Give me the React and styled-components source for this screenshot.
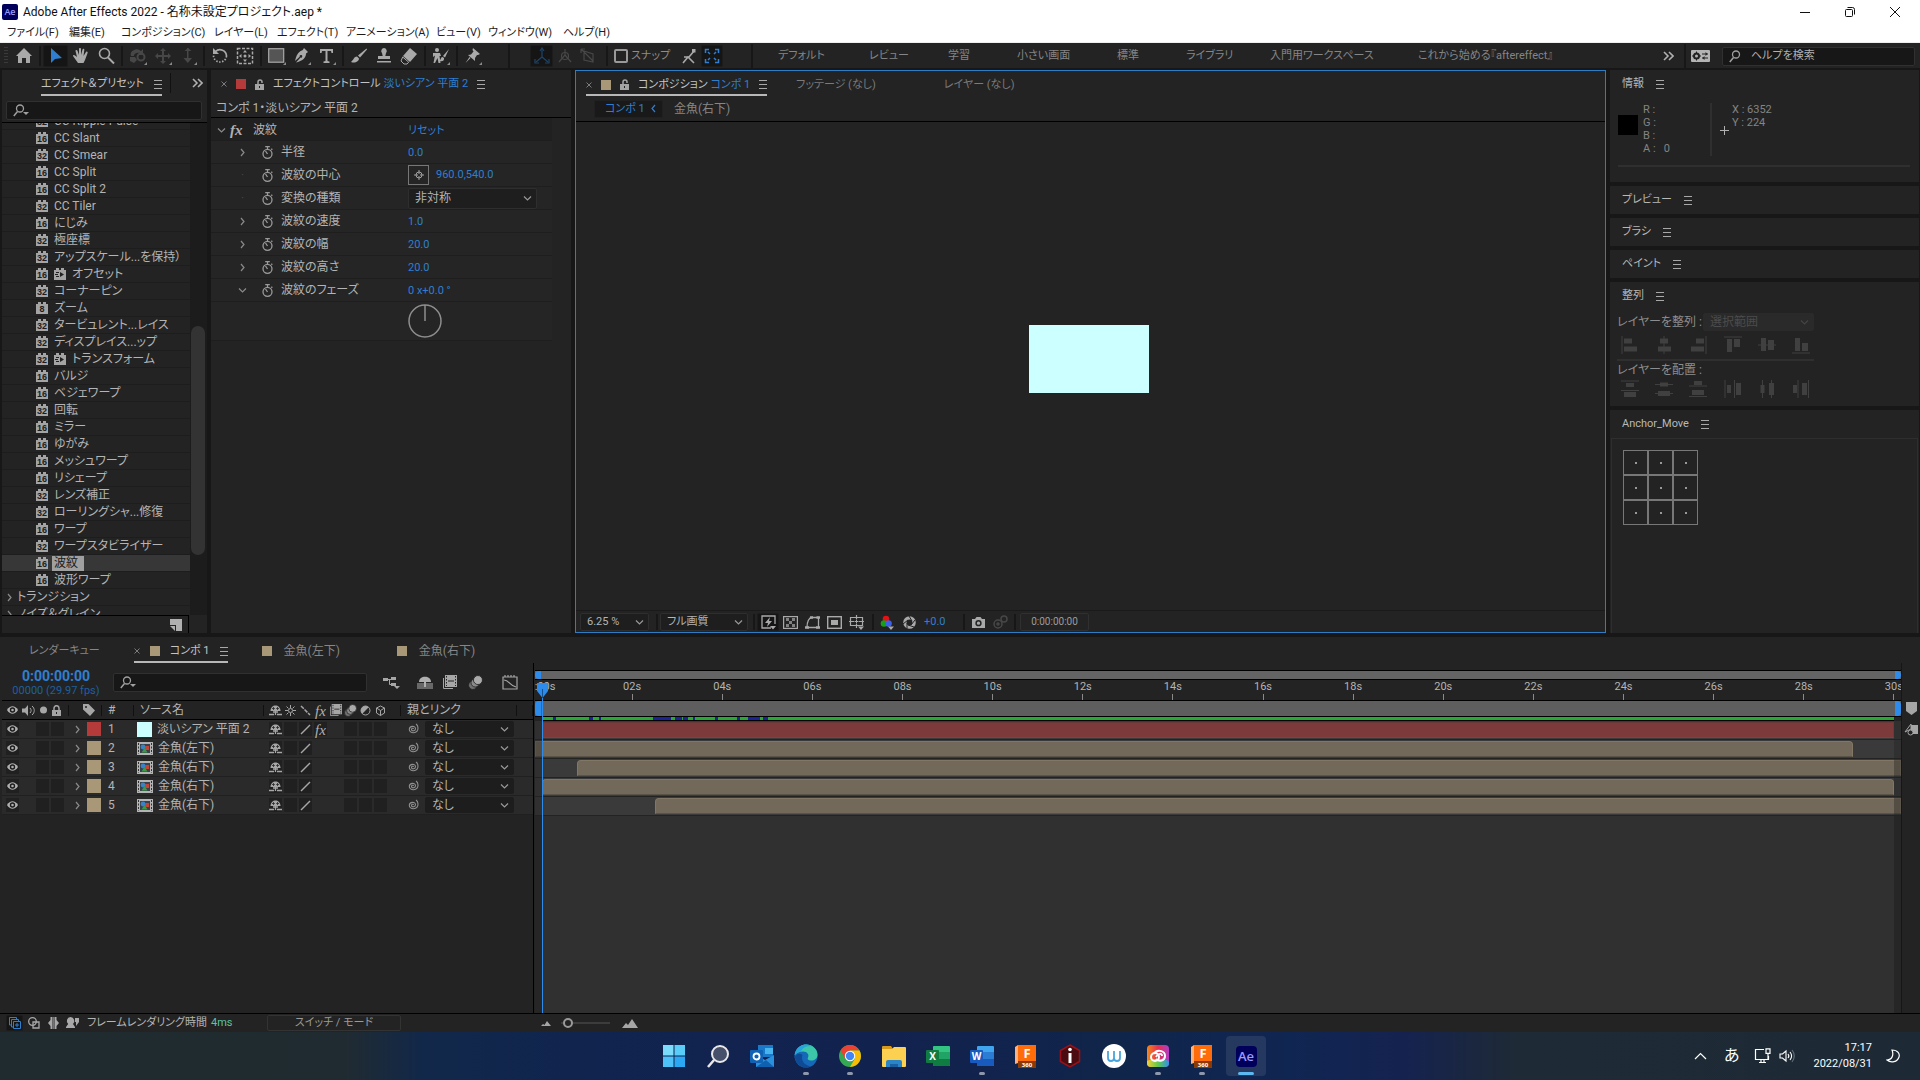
import { useLayoutEffect, useRef } from "react";
import styled, { createGlobalStyle, css } from "styled-components";

const GlobalStyle = createGlobalStyle`
  :root {
    --color-panel: #232323;
    --color-gap: #171717;
    --color-well: #1a1a1a;
    --color-line: #2f2f2f;
    --color-text: #b4b4b4;
    --color-muted: #868686;
    --color-blue: #2f7fd0;
    --color-tan: #a89878;
  }

  *, *::before, *::after {
    box-sizing: border-box;
  }

  body {
    margin: 0;
    background-color: var(--color-gap);
    color: var(--color-text);
    font-family: Roboto, "Noto Sans CJK JP", sans-serif;
    font-size: 12px;
    line-height: 16px;
    font-feature-settings: "palt";
    white-space: nowrap;
  }

  button, input, select {
    font: inherit;
    font-feature-settings: inherit;
    color: inherit;
    margin: 0;
    padding: 0;
    border: none;
    background: none;
  }

  h2, ul, p {
    margin: 0;
    padding: 0;
    font-size: inherit;
    font-weight: normal;
    list-style: none;
  }
`;

/* ---------- shared parts ---------- */

const Screen = styled.div`
  display: flex;
  flex-direction: column;
  height: 100vh;
  overflow: hidden;
`;

const Svg = styled.svg`
  display: block;
  flex: none;
`;

const Separator = styled.span`
  flex: none;
  width: 7px;
  height: ${(p) => p.$height || 20}px;
  background: linear-gradient(#171717, #171717) center / 2px 100% no-repeat;
`;

const Spacer = styled.span`
  flex: ${(p) => (p.$width ? "none" : "1")};
  width: ${(p) => p.$width || 0}px;
`;

const Panel = styled.section`
  display: flex;
  flex-direction: column;
  min-width: 0;
  min-height: 0;
  background-color: var(--color-panel);
`;

const PanelHeader = styled.header`
  flex: none;
  display: flex;
  align-items: center;
  height: 26px;
  font-size: 11px;
`;

const Tab = styled.div`
  display: flex;
  align-items: center;
  height: 100%;
  padding-top: 4px;
  gap: ${(p) => p.$gap || 10}px;
  border-bottom: 2px solid ${(p) => (p.$active ? "#b8b8b8" : "transparent")};
  color: ${(p) => (p.$muted ? "var(--color-muted)" : "#c4c4c4")};
  font-size: ${(p) => (p.$large ? 12 : 11)}px;
`;

const Swatch = styled.span`
  flex: none;
  width: ${(p) => p.$size || 10}px;
  height: ${(p) => p.$size || 10}px;
  background-color: ${(p) => p.$color || "var(--color-tan)"};
`;

const Blue = styled.span`
  color: var(--color-blue);
`;

const IconButton = styled.button`
  flex: none;
  display: flex;
  align-items: center;
  justify-content: center;
  width: ${(p) => p.$width || 25}px;
  height: ${(p) => p.$height || 22}px;
  color: ${(p) => (p.$dim ? "#474747" : p.$blue ? "var(--color-blue)" : "#a9a9a9")};
  ${(p) =>
    p.$active &&
    css`
      background-color: #151515;
      border: 1px solid #1c1c1c;
      border-radius: 2px;
    `}
`;

const SearchBox = styled.label`
  display: flex;
  align-items: center;
  gap: ${(p) => p.$gap || 4}px;
  height: ${(p) => p.$height || 19}px;
  padding: 0 6px;
  background-color: #171717;
  border: 1px solid #303030;
  border-radius: 2px;

  input {
    flex: 1;
    min-width: 0;
    outline: none;
  }

  input::placeholder {
    color: #b0b0b0;
    opacity: 1;
  }
`;

const SelectWrap = styled.span`
  position: relative;
  flex: none;
  display: flex;
  align-items: center;
  width: ${(p) => p.$width}px;
  height: ${(p) => p.$height || 18}px;
  background-color: ${(p) => p.$background || "#1e1e1e"};
  border: 1px solid ${(p) => p.$border || "#2e2e2e"};
  border-radius: 2px;
  color: ${(p) => (p.$dim ? "#4c4c4c" : "var(--color-text)")};

  select {
    appearance: none;
    width: 100%;
    padding-left: 6px;
    opacity: 1;
    line-height: 16px;
  }

  svg {
    position: absolute;
    right: 4px;
    pointer-events: none;
  }
`;

const Hamburger = () => (
  <Svg width="8" height="9" viewBox="0 0 8 9">
    <path d="M0 .5h8M0 4.500h8M0 8.500h8" stroke="#a8a8a8" />
  </Svg>
);

const CloseX = () => (
  <Svg width="6" height="6" viewBox="0 0 6 6">
    <path d="M.5.5l5 5M5.5.5l-5 5" stroke="#7c7c7c" />
  </Svg>
);

const Lock = ({ closed }) => (
  <Svg width="9" height="11" viewBox="0 0 9 11">
    <rect x="0" y="5" width="9" height="6" fill="#a4a4a4" />
    <path
      d={closed ? "M2 5V3.2a2.5 2.5 0 0 1 5 0V5" : "M3 5V3a2 2 0 0 1 4 0v1"}
      fill="none"
      stroke="#a4a4a4"
      strokeWidth="1.5"
    />
    <rect x="4" y="7" width="1" height="2" fill="#222" />
  </Svg>
);

const Chevron = ({ dir = "down", color = "#8a8a8a" }) => (
  <Svg width="9" height="9" viewBox="0 0 9 9" fill="none" stroke={color} strokeWidth="1.2">
    <path
      d={
        dir === "down"
          ? "M1 2.5l3.5 3.5L8 2.5"
          : dir === "right"
          ? "M3 1l3 3.5L3 8"
          : "M6 1L3 4.5 6 8"
      }
    />
  </Svg>
);

const DoubleChevron = () => (
  <Svg width="11" height="10" viewBox="0 0 11 10" fill="none" stroke="#b0b0b0" strokeWidth="1.6">
    <path d="M1 1l4 4-4 4M6 1l4 4-4 4" />
  </Svg>
);

const Magnifier = ({ caret = true }) => (
  <Svg width="16" height="13" viewBox="0 0 16 13">
    <circle cx="7" cy="4.5" r="3.5" fill="none" stroke="#a0a0a0" strokeWidth="1.3" />
    <path d="M4.5 7.5L.8 12" stroke="#a0a0a0" strokeWidth="1.5" />
    {caret && <path d="M10 8h6l-3 3z" fill="#a0a0a0" />}
  </Svg>
);

const Select = ({ label, value, ...rest }) => (
  <SelectWrap {...rest}>
    <select aria-label={label} defaultValue={value} disabled={rest.$dim}>
      <option>{value}</option>
    </select>
    <Chevron color={rest.$dim ? "#444" : "#999"} />
  </SelectWrap>
);

/* ---------- window title and menus ---------- */

const TitleBar = styled.div`
  flex: none;
  display: flex;
  align-items: center;
  height: 23px;
  padding: 0 5px 0 2px;
  gap: 5px;
  background-color: white;
  color: #111;
`;

const AppBadge = styled.span`
  display: grid;
  place-items: center;
  width: ${(p) => p.$size}px;
  height: ${(p) => p.$size}px;
  border-radius: ${(p) => (p.$size > 16 ? 4 : 2)}px;
  background-color: #00005b;
  color: #9b9bff;
  font-family: "Open Sans", sans-serif;
  font-weight: 600;
  font-size: ${(p) => (p.$size > 16 ? 13 : 9)}px;
  line-height: 1;
`;

const WindowButton = styled.button`
  width: 40px;
  height: 22px;
  display: grid;
  place-items: center;
`;

const MenuBar = styled.nav`
  flex: none;
  display: flex;
  align-items: center;
  height: 20px;
  padding-left: 7px;
  background-color: white;
  color: #1c1c1c;
  font-size: 11px;
  border-bottom: 1px solid #eee;
`;

const MenuItem = styled.button`
  width: ${(p) => p.$width}px;
  text-align: left;
`;

const MENUS = [
  ["ファイル(F)", 62],
  ["編集(E)", 52],
  ["コンポジション(C)", 93],
  ["レイヤー(L)", 63],
  ["エフェクト(T)", 69],
  ["アニメーション(A)", 90],
  ["ビュー(V)", 52],
  ["ウィンドウ(W)", 75],
  ["ヘルプ(H)", 60],
];

function WindowChrome() {
  return (
    <>
      <TitleBar>
        <AppBadge $size={16}>Ae</AppBadge>
        <span>Adobe After Effects 2022 - 名称未設定プロジェクト.aep *</span>
        <Spacer />
        <WindowButton aria-label="最小化">
          <Svg width="10" height="10" viewBox="0 0 10 10" stroke="#111">
            <path d="M0 5.5h10" />
          </Svg>
        </WindowButton>
        <WindowButton aria-label="元に戻す">
          <Svg width="10" height="10" viewBox="0 0 10 10" fill="none" stroke="#111">
            <rect x=".5" y="2.5" width="7" height="7" rx="1" />
            <path d="M2.5 .5h5a2 2 0 0 1 2 2v5" />
          </Svg>
        </WindowButton>
        <WindowButton aria-label="閉じる">
          <Svg width="10" height="10" viewBox="0 0 10 10" stroke="#111">
            <path d="M0 0l10 10M10 0L0 10" />
          </Svg>
        </WindowButton>
      </TitleBar>
      <MenuBar>
        {MENUS.map(([name, width]) => (
          <MenuItem key={name} $width={width}>
            {name}
          </MenuItem>
        ))}
      </MenuBar>
    </>
  );
}

/* ---------- toolbar ---------- */

const Toolbar = styled.div`
  flex: none;
  display: flex;
  align-items: center;
  height: 25px;
  margin-bottom: 2px;
  padding-top: 1px;
  padding-left: 2px;
  padding-right: 5px;
  background-color: var(--color-panel);
`;

const Grip = styled.span`
  width: 4px;
  height: 18px;
  margin: 0 3px 0 2px;
  background: repeating-linear-gradient(#3a3a3a 0 1px, transparent 1px 3px);
`;

const SnapLabel = styled.label`
  display: flex;
  align-items: center;
  gap: 3px;
  font-size: 11px;
  color: #8c8c8c;
  width: 60px;

  input {
    appearance: none;
    width: 14px;
    height: 14px;
    border: 2px solid #999;
    border-radius: 2px;
  }
`;

const Workspace = styled.button`
  flex: none;
  width: ${(p) => p.$width}px;
  text-align: left;
  font-size: 11px;
  color: #858585;
`;

const WORKSPACES = [
  ["デフォルト", 91],
  ["レビュー", 79],
  ["学習", 69],
  ["小さい画面", 100],
  ["標準", 69],
  ["ライブラリ", 84],
  ["入門用ワークスペース", 148],
  ["これから始める『aftereffect』", 150],
];

const Corner = () => <path d="M18 18h-3l3-3z" fill="#8a8a8a" />;

const TOOLS = {
  home: <path d="M9 1L1 9h2v7h4v-5h4v5h4V9h2z" fill="currentColor" />,
  select: <path d="M4 1v15l4-4 7-1z" fill="currentColor" />,
  hand: (
    <path
      d="M6 16L1 9c0-1 1.200-1.500 2-.5L5 10 3.500 4c0-1.300 1.500-1.500 2-.3L7 8V2c0-1.300 2-1.300 2 0v6l1.500-5.500c.4-1 2-.8 1.800.5L11.500 9l2.500-4c.8-1 2.200 0 1.500 1.200L13 13l-1.500 3z"
      fill="currentColor"
    />
  ),
  zoom: (
    <g fill="none" stroke="currentColor" strokeWidth="1.6">
      <circle cx="7.500" cy="6.500" r="5" />
      <path d="M11 10.500l6 6" strokeWidth="2" />
    </g>
  ),
  orbit: (
    <>
      <path d="M2 9a6 5 0 0 1 10-5l2-2v6H9l1.800-2A4 3 0 0 0 5 9z" fill="currentColor" />
      <circle cx="12" cy="10" r="3.500" fill="none" stroke="currentColor" strokeWidth="2" />
      <path d="M1 10h5l2 3-3 3-4-2z" fill="currentColor" />
      <Corner />
    </>
  ),
  move: (
    <>
      <path d="M9 1l3 3h-2v4h4V6l3 3-3 3v-2h-4v4h2l-3 3-3-3h2v-4H4v2L1 9l3-3v2h4V4H6z" fill="currentColor" />
      <Corner />
    </>
  ),
  dolly: (
    <>
      <path d="M8 1h1.500v10H13l-4.200 5L4.500 11H8z" fill="currentColor" />
      <path d="M5.500 4L9 1l3.500 3z" fill="currentColor" />
      <Corner />
    </>
  ),
  rotate: (
    <g fill="none" stroke="currentColor" strokeWidth="1.700">
      <path d="M4.500 4.500A6.500 6.500 0 0 1 15.500 9" />
      <path d="M15.500 9A6.500 6.500 0 1 1 2.500 8" strokeDasharray="1.500 1.500" />
      <path d="M2 1v6h6z" fill="currentColor" stroke="none" />
    </g>
  ),
  panBehind: (
    <g fill="none" stroke="currentColor" strokeWidth="1.500">
      <rect x="1.500" y="1.500" width="15" height="15" strokeDasharray="3 1.500" />
      <path d="M9 3l2 2.500H7zM9 15l2-2.500H7zM3 9l2.500 2V7zM15 9l-2.500 2V7z" fill="currentColor" stroke="none" />
      <circle cx="9" cy="9" r="1.500" fill="currentColor" stroke="none" />
    </g>
  ),
  rect: (
    <>
      <rect x=".7" y="1.700" width="15" height="13.500" fill="#555" stroke="currentColor" strokeWidth="1.200" />
      <Corner />
    </>
  ),
  pen: (
    <>
      <path d="M11 1l4 4-2 1.500c0 4-3 7-8 8.500l-2 .5 4.500-5a1.300 1.300 0 1 0-.8-.8L2 14l.8-3C4 7 6 4.500 9.800 3z" fill="currentColor" />
      <Corner />
    </>
  ),
  type: (
    <>
      <path d="M2 2h13v4h-1.500l-.5-2H9.500v10l2 .5V16h-6v-1.500l2-.5V4H4l-.5 2H2z" fill="currentColor" />
      <Corner />
    </>
  ),
  brush: (
    <path d="M16.500 1.500L8 8.500l2 2 7-8zM7 9.500c-3 0-3 3-6 5.500 4 1.500 8-.5 8-3.500z" fill="currentColor" />
  ),
  stamp: (
    <path d="M9 1a3 3 0 0 0-2 5l.7 3H3v3h12V9h-4.700l.7-3a3 3 0 0 0-2-5zM2 14h14v1.500H2z" fill="currentColor" />
  ),
  eraser: (
    <>
      <path d="M10 1l7 6-7 8-7-6z" fill="currentColor" />
      <path d="M2.700 10l6 5.200L7 17H4l-3-3z" fill="none" stroke="currentColor" />
    </>
  ),
  roto: (
    <>
      <circle cx="5" cy="3" r="2" fill="currentColor" />
      <path d="M1 6h7l1 3H7.500l1 7h-2L5.500 11 3 16H1.500L3 8.500 1 10z" fill="currentColor" />
      <path d="M17 2l-6 7 2 1.500zM10.500 10c-1.500 0-1.500 2-3 4 3 1 5-.5 4.500-3z" fill="currentColor" />
      <Corner />
    </>
  ),
  pin: (
    <>
      <path d="M9 1l7 6-2 1-1 0-2 3v3L4 8l3-.5L9.500 4.500 8.500 3zM6.500 11L1.500 16l4-6z" fill="currentColor" />
      <Corner />
    </>
  ),
  axis: (
    <g fill="none" stroke="#1f4468" strokeWidth="1.200">
      <path d="M9 2v8l-6 5M9 10l6 5" />
      <path d="M7 4l2-3 2 3M2 12v4h4M16 12v4h-4" />
    </g>
  ),
  axisWorld: (
    <g fill="none" stroke="currentColor" strokeWidth="1.200">
      <path d="M9 2v6l-6 7M9 8l6 7" />
      <circle cx="9" cy="9" r="3.500" />
    </g>
  ),
  axisView: (
    <g fill="none" stroke="currentColor" strokeWidth="1.200">
      <path d="M2 2l12 12M5 4v9l9 2V7zM2 2v4M2 2h4" />
    </g>
  ),
  snapEdge: (
    <g fill="none" stroke="currentColor" strokeWidth="1.600">
      <path d="M3 16l5-6 6 6M4 10l5 0 5-6" />
      <rect x="12" y="2" width="3.500" height="3.500" fill="currentColor" stroke="none" />
    </g>
  ),
  snapBox: (
    <g fill="none" stroke="currentColor" strokeWidth="1.500">
      <path d="M2.500 6V2.500H6M12 2.500h3.500V6M15.500 12v3.500H12M6 15.500H2.500V12M5 5l2 2M13 5l-2 2M5 13l2-2M13 13l-2-2" />
    </g>
  ),
};

const Tool = ({ name, label, ...rest }) => (
  <IconButton aria-label={label || name} {...rest}>
    <Svg width="18" height="18" viewBox="0 0 18 18">
      {TOOLS[name]}
    </Svg>
  </IconButton>
);

const HelpSearch = styled(SearchBox)`
  width: 193px;
  font-size: 11px;
`;

function ToolStrip() {
  return (
    <Toolbar>
      <Grip />
      <Tool name="home" />
      <Separator />
      <Tool name="select" $active $blue />
      <Tool name="hand" />
      <Tool name="zoom" />
      <Separator />
      <Tool name="orbit" $dim />
      <Tool name="move" $dim />
      <Tool name="dolly" $dim />
      <Separator />
      <Tool name="rotate" />
      <Tool name="panBehind" />
      <Separator />
      <Tool name="rect" />
      <Tool name="pen" />
      <Tool name="type" />
      <Separator />
      <Tool name="brush" />
      <Tool name="stamp" />
      <Tool name="eraser" />
      <Separator />
      <Tool name="roto" />
      <Separator />
      <Tool name="pin" />
      <Spacer $width={20} />
      <Separator $height={24} />
      <Spacer $width={18} />
      <Tool name="axis" $dim $active $width={23} />
      <Tool name="axisWorld" $dim $width={23} />
      <Tool name="axisView" $dim $width={23} />
      <Spacer $width={4} />
      <Separator />
      <Spacer $width={4} />
      <SnapLabel>
        <input type="checkbox" />
        スナップ
      </SnapLabel>
      <Spacer $width={2} />
      <Tool name="snapEdge" />
      <Tool name="snapBox" $active $blue $width={22} />
      <Spacer $width={25} />
      <Separator $height={24} />
      <Spacer $width={23} />
      {WORKSPACES.map(([name, width]) => (
        <Workspace key={name} $width={width}>
          {name}
        </Workspace>
      ))}
      <Spacer />
      <IconButton aria-label="その他">
        <DoubleChevron />
      </IconButton>
      <Separator $height={24} />
      <IconButton aria-label="ワークスペース設定" $width={24}>
        <Svg width="19" height="12" viewBox="0 0 19 12">
          <rect width="19" height="12" rx="1" fill="#b4b4b4" />
          <circle cx="5.500" cy="6" r="2.500" fill="none" stroke="#222" strokeWidth="2" />
          <path d="M5.500 1.500v9M1 6h9" stroke="#222" strokeDasharray="1.500 6" />
          <path d="M11 4h6M11 8h6" stroke="#222" />
          <path d="M14.500 2l2 2-2 2zM13.500 6l-2 2 2 2z" fill="#222" />
        </Svg>
      </IconButton>
      <Spacer $width={10} />
      <HelpSearch $gap={6}>
        <Magnifier caret={false} />
        <input aria-label="ヘルプを検索" placeholder="ヘルプを検索" />
      </HelpSearch>
    </Toolbar>
  );
}

/* ---------- effects & presets ---------- */

const EffectsHeader = styled(PanelHeader)`
  padding-left: 39px;
  padding-right: 4px;
`;

const HeaderDivider = styled.span`
  width: 1px;
  height: 20px;
  margin-left: 8px;
  background-color: #111;
`;

const EffectsSearch = styled(SearchBox)`
  margin: 5px 5px 2px 4px;
`;

const EffectsBody = styled.div`
  flex: 1;
  min-height: 0;
  display: flex;
  border-top: 1px solid black;
`;

const EffectsList = styled.ul`
  flex: 1;
  min-width: 0;
  overflow: hidden;
`;

const EffectRow = styled.li`
  display: flex;
  align-items: center;
  gap: ${(p) => (p.$folder ? 3 : 6)}px;
  height: 17px;
  padding-left: ${(p) => (p.$folder ? 3 : 34)}px;
  border-bottom: 1px solid #1d1d1d;
  background-color: ${(p) => (p.$selected ? "#373737" : "transparent")};
`;

const EffectName = styled.span`
  line-height: 15px;
  ${(p) =>
    p.$selected &&
    css`
      margin-left: -2px;
      padding: 0 6px 0 2px;
      background-color: #a0a0a0;
      color: #1a1a1a;
    `}
`;

const ScrollTrack = styled.div`
  flex: none;
  width: 17px;
  padding: 203px 2px 60px 1px;
  background-color: #1c1c1c;
`;

const ScrollThumb = styled.div`
  height: 100%;
  border-radius: 7px;
  background-color: #333;
`;

const EffectsFooter = styled.div`
  flex: none;
  display: flex;
  justify-content: flex-end;
  align-items: center;
  height: 18px;
  width: 187px;
  padding-right: 6px;
  border-top: 1px solid black;
  border-right: 1px solid black;
`;

const Badge = styled.span`
  flex: none;
  width: 12px;
  height: 12px;
  padding-top: 3px;
  background:
    linear-gradient(#a4a4a4, #a4a4a4) 2px 0 / 3px 2px no-repeat,
    linear-gradient(#a4a4a4, #a4a4a4) 7px 0 / 3px 2px no-repeat,
    linear-gradient(#a4a4a4, #a4a4a4) 0 2px / 12px 10px no-repeat;
  color: #1d1d1d;
  font-family: "Liberation Sans", sans-serif;
  font-size: 9px;
  line-height: 9px;
  font-weight: 700;
  text-align: center;
`;

const EFFECTS = [
  [32, "CC Ripple Pulse"],
  [16, "CC Slant"],
  [32, "CC Smear"],
  [16, "CC Split"],
  [16, "CC Split 2"],
  [32, "CC Tiler"],
  [16, "にじみ"],
  [32, "極座標"],
  [32, "アップスケール...を保持）"],
  [16, "オフセット", true],
  [32, "コーナーピン"],
  [8, "ズーム"],
  [32, "タービュレント...レイス"],
  [32, "ディスプレイス...ップ"],
  [32, "トランスフォーム", true],
  [16, "バルジ"],
  [16, "ベジェワープ"],
  [32, "回転"],
  [16, "ミラー"],
  [16, "ゆがみ"],
  [16, "メッシュワープ"],
  [16, "リシェープ"],
  [32, "レンズ補正"],
  [32, "ローリングシャ...修復"],
  [16, "ワープ"],
  [32, "ワープスタビライザー"],
  [16, "波紋"],
  [16, "波形ワープ"],
];

const AccelBadge = () => (
  <Svg width="12" height="12" viewBox="0 0 12 12">
    <path d="M2 0h3v2h2V0h3v2h2v10H0V2h2z" fill="#a4a4a4" />
    <path d="M2 4.500h3M1 6.500h3M2 8.500h3" stroke="#222" />
    <path d="M6 4l4 2.500L6 9z" fill="#222" />
  </Svg>
);

function EffectsPanel() {
  const listRef = useRef(null);

  useLayoutEffect(() => {
    listRef.current.scrollTop = 10;
  }, []);

  return (
    <Panel>
      <EffectsHeader>
        <Tab $active>
          <h2>エフェクト＆プリセット</h2>
          <Hamburger />
        </Tab>
        <HeaderDivider />
        <Spacer />
        <DoubleChevron />
      </EffectsHeader>
      <EffectsSearch>
        <Magnifier />
        <input aria-label="エフェクトを検索" />
      </EffectsSearch>
      <EffectsBody>
        <EffectsList ref={listRef}>
          {EFFECTS.map(([bits, name, accel]) => (
            <EffectRow key={name} $selected={name === "波紋"}>
              <Badge>{bits}</Badge>
              {accel && <AccelBadge />}
              <EffectName $selected={name === "波紋"}>{name}</EffectName>
            </EffectRow>
          ))}
          {["トランジション", "ノイズ＆グレイン"].map((name) => (
            <EffectRow key={name} $folder>
              <Chevron dir="right" />
              <EffectName>{name}</EffectName>
            </EffectRow>
          ))}
        </EffectsList>
        <ScrollTrack>
          <ScrollThumb />
        </ScrollTrack>
      </EffectsBody>
      <EffectsFooter>
        <IconButton aria-label="新規" $width={12} $height={12}>
          <Svg width="12" height="12" viewBox="0 0 12 12">
            <path d="M0 0h12v12H6V6H0z" fill="#b0b0b0" />
            <path d="M0 7h5v5z" fill="#b0b0b0" />
          </Svg>
        </IconButton>
      </EffectsFooter>
    </Panel>
  );
}

/* ---------- effect controls ---------- */

const ControlsTab = styled(Tab)`
  padding-left: 10px;
`;

const ControlsPath = styled.p`
  height: 22px;
  padding: 4px 5px 0;
  border-bottom: 1px solid black;
`;

const ControlRow = styled.div`
  display: grid;
  grid-template-columns: ${(p) => (p.$head ? "19px 23px 155px 1fr" : "27px 19px 127px 1fr")};
  align-items: center;
  width: 341px;
  min-height: 23px;
  padding-top: ${(p) => (p.$head ? 2 : 0)}px;
  padding-left: ${(p) => (p.$head ? 0 : 24)}px;
  border-bottom: 1px solid #1e1e1e;
  background-color: ${(p) => (p.$head ? "#202020" : "#252525")};

  > svg:first-child {
    margin-left: ${(p) => (p.$head ? 6 : 3)}px;
  }
`;

const ControlValue = styled.span`
  display: flex;
  align-items: center;
  gap: 7px;
  padding-top: ${(p) => (p.$point ? 0 : 2)}px;
  font-size: 11px;
  color: var(--color-blue);
`;

const PointButton = styled.button`
  display: grid;
  place-items: center;
  width: 21px;
  height: 20px;
  border: 1px solid #777;
`;

const Dot = styled.span`
  color: #444;
  padding-left: 6px;
`;

const DialRow = styled.div`
  width: 341px;
  height: 39px;
  padding: 2px 0 0 197px;
  background-color: #252525;
  border-bottom: 1px solid #1e1e1e;
`;

const FxLabel = styled.span`
  font-family: "Liberation Serif", serif;
  font-style: italic;
  font-weight: ${(p) => (p.$bold ? 700 : 400)};
  font-size: 15px;
  color: #b0b0b0;
`;

const Stopwatch = () => (
  <Svg width="11" height="13" viewBox="0 0 11 13" fill="none" stroke="#9a9a9a" strokeWidth="1.300">
    <circle cx="5.500" cy="7.800" r="4.500" />
    <path d="M5.500 3.300V.7M3.200.7h4.600M5.500 8L3.500 5M9.300 2.800l1 1" />
  </Svg>
);

function EffectControls() {
  return (
    <Panel>
      <PanelHeader>
        <ControlsTab $gap={9}>
          <CloseX />
          <Swatch $color="#b53a3a" />
          <Lock />
          <h2>
            エフェクトコントロール <Blue>淡いシアン 平面 2</Blue>
          </h2>
          <Hamburger />
        </ControlsTab>
      </PanelHeader>
      <ControlsPath>コンポ 1・淡いシアン 平面 2</ControlsPath>
      <ControlRow $head>
        <Chevron />
        <FxLabel $bold>fx</FxLabel>
        <span>波紋</span>
        <ControlValue>リセット</ControlValue>
      </ControlRow>
      <ControlRow>
        <Chevron dir="right" />
        <Stopwatch />
        <span>半径</span>
        <ControlValue>0.0</ControlValue>
      </ControlRow>
      <ControlRow>
        <Dot>·</Dot>
        <Stopwatch />
        <span>波紋の中心</span>
        <ControlValue $point>
          <PointButton aria-label="波紋の中心を指定">
            <Svg width="10" height="10" viewBox="0 0 10 10" fill="none" stroke="#a0a0a0">
              <circle cx="5" cy="5" r="3" />
              <path d="M5 0v4M5 6v4M0 5h4M6 5h4" />
            </Svg>
          </PointButton>
          960.0,540.0
        </ControlValue>
      </ControlRow>
      <ControlRow>
        <Dot>·</Dot>
        <Stopwatch />
        <span>変換の種類</span>
        <Select label="変換の種類" value="非対称" $width={129} $height={21} />
      </ControlRow>
      {[
        ["波紋の速度", "1.0"],
        ["波紋の幅", "20.0"],
        ["波紋の高さ", "20.0"],
      ].map(([name, value]) => (
        <ControlRow key={name}>
          <Chevron dir="right" />
          <Stopwatch />
          <span>{name}</span>
          <ControlValue>{value}</ControlValue>
        </ControlRow>
      ))}
      <ControlRow>
        <Chevron />
        <Stopwatch />
        <span>波紋のフェーズ</span>
        <ControlValue>0 x+0.0 °</ControlValue>
      </ControlRow>
      <DialRow>
        <Svg width="34" height="34" viewBox="0 0 34 34" fill="none" stroke="#8e8e8e" strokeWidth="1.500">
          <circle cx="17" cy="17" r="16" />
          <path d="M17 1v16" />
        </Svg>
      </DialRow>
    </Panel>
  );
}

/* ---------- composition viewer ---------- */

const ViewerPanel = styled(Panel)`
  border: 1px solid #2d7cc4;
`;

const ViewerTabs = styled(PanelHeader)`
  height: 25px;
  padding-left: 10px;
`;

const MutedTab = styled.button`
  margin-left: ${(p) => p.$left}px;
  padding-top: 2px;
  color: #7a7a7a;
`;

const Breadcrumb = styled.div`
  flex: none;
  display: flex;
  align-items: center;
  gap: 11px;
  height: 26px;
  padding: 0 18px;
  border-bottom: 1px solid black;
  color: var(--color-muted);
`;

const Crumb = styled.button`
  display: flex;
  align-items: center;
  justify-content: space-between;
  width: 69px;
  height: 18px;
  padding: 0 4px 0 10px;
  font-size: 11px;
  background-color: #191919;
  border: 1px solid #202020;
  color: var(--color-blue);
`;

const Viewport = styled.div`
  flex: 1;
  min-height: 0;
  display: grid;
  place-items: center;
  padding: 0 4px 14px 0;
  border-bottom: 1px solid #1a1a1a;
`;

const Solid = styled.div`
  width: 120px;
  height: 68px;
  background-color: #ccffff;
`;

const ViewerFooter = styled.div`
  flex: none;
  display: flex;
  align-items: center;
  height: 21px;
  padding-left: 4px;
  padding-top: 1px;
  font-size: 11px;
`;

const Timecode = styled.button`
  width: 69px;
  height: 18px;
  border: 1px solid #303030;
  border-radius: 2px;
  font-size: 10px;
  color: #9c9c9c;
`;

const Exposure = styled(Blue)`
  width: 40px;
  padding-left: 4px;
`;

const footerIcons = {
  fast: (
    <>
      <path d="M10 13H1V1h13v8" stroke="currentColor" fill="none" strokeWidth="1.300" />
      <path d="M9 2L4 8h3l-1 4 5-6H8z" fill="currentColor" />
      <path d="M9 11h6l-3 3.500z" fill="currentColor" />
    </>
  ),
  checker: (
    <>
      <rect x=".6" y="1.600" width="13.800" height="11.800" fill="none" stroke="currentColor" strokeWidth="1.200" />
      <path d="M3 3h3v3H3zM9 3h3v3H9zM6 6h3v3H6zM3 9h3v3H3zM9 9h3v3H9z" fill="currentColor" opacity=".7" />
    </>
  ),
  mask: (
    <g stroke="currentColor" fill="none" strokeWidth="1.300">
      <path d="M2 12.500c0-6 2-10 5-10h6.500v10z" />
      <path d="M0 12.500h4M5 2.500h3M11 12.500h4M11.500 2.500h4" strokeWidth="2.500" />
    </g>
  ),
  roi: (
    <>
      <rect x=".7" y="1.700" width="13.600" height="11.600" fill="none" stroke="currentColor" strokeWidth="1.400" />
      <rect x="4" y="5" width="7" height="5" fill="currentColor" />
    </>
  ),
  guides: (
    <>
      <path d="M1.500 2.500h12v8h-12zM7.500 0v13M0 6.500h15" stroke="currentColor" fill="none" strokeWidth="1.200" />
      <rect x="5" y="4" width="5" height="5" fill="#232323" />
      <path d="M7.500 4.500v4M5.500 6.500h4" stroke="currentColor" />
      <path d="M9 11.500h6l-3 3.500z" fill="currentColor" />
    </>
  ),
  rgb: (
    <>
      <circle cx="6" cy="4" r="3.300" fill="#e81010" />
      <circle cx="4" cy="8.500" r="3.300" fill="#16a016" />
      <circle cx="8.500" cy="8.500" r="3.300" fill="#3a62e8" />
      <path d="M8 11.500h6l-3 3.500z" fill="currentColor" />
    </>
  ),
  aperture: (
    <>
      <circle cx="7.500" cy="7.500" r="4.600" fill="none" stroke="currentColor" strokeWidth="3.400" />
      <path d="M7 1l3 5M13 5l-4 5M12 12l-6-2M5 14l0-6M1 9l5-4" stroke="#232323" />
    </>
  ),
  camera: (
    <>
      <path d="M1 4h3l1.500-2h4L11 4h3v9H1z" fill="currentColor" />
      <circle cx="7.500" cy="8.200" r="2.400" fill="none" stroke="#232323" strokeWidth="1.500" />
    </>
  ),
  ghost: (
    <g fill="none" stroke="currentColor" strokeWidth="1.500">
      <circle cx="5" cy="9" r="4" />
      <circle cx="11" cy="4" r="3" />
      <circle cx="5" cy="9" r="1" />
    </g>
  ),
};

const FooterIcon = ({ name, ...rest }) => (
  <IconButton aria-label={name} $width={22} $height={18} {...rest}>
    <Svg width="15" height="15" viewBox="0 0 15 15">
      {footerIcons[name]}
    </Svg>
  </IconButton>
);

function Viewer() {
  return (
    <ViewerPanel>
      <ViewerTabs>
        <Tab $active $gap={9}>
          <CloseX />
          <Swatch />
          <Lock />
          <h2>
            コンポジション <Blue>コンポ 1</Blue>
          </h2>
          <Hamburger />
        </Tab>
        <MutedTab $left={29}>フッテージ (なし)</MutedTab>
        <MutedTab $left={68}>レイヤー (なし)</MutedTab>
      </ViewerTabs>
      <Breadcrumb>
        <Crumb>
          コンポ 1
          <Chevron dir="left" color="#2f7fd0" />
        </Crumb>
        <span>金魚(右下)</span>
      </Breadcrumb>
      <Viewport>
        <Solid />
      </Viewport>
      <ViewerFooter>
        <Select label="拡大率" value="6.25 %" $width={69} />
        <Spacer $width={4} />
        <Separator $height={16} />
        <Select label="解像度" value="フル画質" $width={88} />
        <Spacer $width={2} />
        <Separator $height={16} />
        <FooterIcon name="fast" $active />
        <FooterIcon name="checker" />
        <FooterIcon name="mask" />
        <FooterIcon name="roi" />
        <FooterIcon name="guides" />
        <Spacer $width={2} />
        <Separator $height={16} />
        <FooterIcon name="rgb" />
        <FooterIcon name="aperture" />
        <Exposure>+0.0</Exposure>
        <Separator $height={16} />
        <FooterIcon name="camera" />
        <FooterIcon name="ghost" $dim />
        <Separator $height={16} />
        <Spacer $width={2} />
        <Timecode>0:00:00:00</Timecode>
      </ViewerFooter>
    </ViewerPanel>
  );
}

/* ---------- right column ---------- */

const Column = styled.div`
  display: flex;
  flex-direction: column;
  gap: 4px;
  min-height: 0;
`;

const SidePanel = styled(Panel)`
  flex: ${(p) => (p.$grow ? "1" : "none")};
`;

const SideHeader = styled.header`
  display: flex;
  align-items: center;
  gap: 12px;
  height: 28px;
  padding-left: 12px;
  font-size: 11px;
  color: #b8b8b8;
`;

const InfoGrid = styled.div`
  display: grid;
  grid-template-columns: 20px 69px 10px 1fr;
  gap: 5px;
  height: 64px;
  margin: 5px 9px 0 8px;
  border-bottom: 2px solid var(--color-line);
  color: #848484;
  font-size: 11px;
  line-height: 13px;
`;

const ColorChip = styled.span`
  width: 20px;
  height: 20px;
  margin-top: 12px;
  background-color: black;
`;

const Channels = styled.div`
  height: 53px;
  border-right: 2px solid var(--color-line);
`;

const Cross = styled.span`
  padding: 23px 0 0 3px;
`;

const InfoSpace = styled.div`
  height: 15px;
`;

const AlignBody = styled.div`
  width: 204px;
  padding: 3px 0 7px 7px;
  color: #8d8d8d;
`;

const AlignLine = styled.div`
  display: flex;
  align-items: center;
  justify-content: space-between;
  height: 18px;
`;

const AlignIcons = styled.div`
  display: flex;
  justify-content: space-between;
  align-items: center;
  height: ${(p) => (p.$ruled ? 30 : 20)}px;
  padding: 0 4px;
  border-bottom: ${(p) => (p.$ruled ? "2px solid var(--color-line)" : "none")};
`;

const AnchorBody = styled.div`
  flex: 1;
  padding: 11px;
  margin: 0 1px 0 1px;
  border: 1px solid #2e2e2e;
  border-bottom: none;
`;

const AnchorGrid = styled.div`
  display: grid;
  grid-template-columns: repeat(3, 25px);
  grid-auto-rows: 25px;
`;

const AnchorCell = styled.button`
  border: 1px solid #777;

  &::before {
    content: "";
    display: block;
    width: 2px;
    height: 2px;
    margin: 0 auto;
    background-color: #999;
  }
`;

const ALIGN_H = ["M1 0v18", "M9 0v18", "M17 0v18"];
const ALIGN_V = ["M0 1h18", "M0 9h18", "M0 17h18"];
const DISTRIBUTE = ["M0 1h18M0 10.500h18", "M0 4.500h18M0 13.500h18", "M0 6h18M0 16.500h18"];

const AlignIcon = ({ index, distribute }) => {
  const vertical = distribute ? index < 3 : index > 2;
  const i = index % 3;
  return (
    <IconButton aria-label={`${distribute ? "配置" : "整列"} ${index + 1}`} $width={18} $height={18}>
      <Svg width="18" height="18" viewBox="0 0 18 18" stroke="#404040" fill="#404040">
        {!distribute && !vertical && (
          <>
            <path d={ALIGN_H[i]} />
            <rect x={[3, 5, 7][i]} y="2.500" width="8" height="5" stroke="none" />
            <rect x={[3, 3, 2][i]} y="10.500" width="13" height="5" stroke="none" />
          </>
        )}
        {!distribute && vertical && (
          <>
            <path d={ALIGN_V[i]} />
            <rect x="3" y={[3, 2, 2][i]} width="5" height="13" stroke="none" />
            <rect x="10" y={[3, 4, 7][i]} width="6" height={[8, 10, 8][i]} stroke="none" />
          </>
        )}
        {distribute && (
          <g transform={vertical ? undefined : "matrix(0 1 1 0 0 0)"}>
            <path d={DISTRIBUTE[i]} />
            <rect x="5" y={[3, 2.5, 1][i]} width="8" height="4" stroke="none" />
            <rect x="3" y={[12, 11, 10][i]} width="12" height="5" stroke="none" />
          </g>
        )}
      </Svg>
    </IconButton>
  );
};

function SideColumn() {
  return (
    <Column>
      <SidePanel>
        <SideHeader>
          <h2>情報</h2>
          <Hamburger />
        </SideHeader>
        <InfoGrid>
          <ColorChip />
          <Channels>
            <div>R :</div>
            <div>G :</div>
            <div>B :</div>
            <div>A : &nbsp; 0</div>
          </Channels>
          <Cross>
            <Svg width="9" height="9" viewBox="0 0 9 9" stroke="#b0b0b0">
              <path d="M4.500 0v9M0 4.500h9" />
            </Svg>
          </Cross>
          <div>
            <div>X : 6352</div>
            <div>Y : 224</div>
          </div>
        </InfoGrid>
        <InfoSpace />
      </SidePanel>
      {["プレビュー", "ブラシ", "ペイント"].map((name) => (
        <SidePanel key={name}>
          <SideHeader>
            <h2>{name}</h2>
            <Hamburger />
          </SideHeader>
        </SidePanel>
      ))}
      <SidePanel>
        <SideHeader>
          <h2>整列</h2>
          <Hamburger />
        </SideHeader>
        <AlignBody>
          <AlignLine>
            <span>レイヤーを整列 :</span>
            <Select label="整列先" value="選択範囲" $width={111} $dim $background="#2a2a2a" $border="#2a2a2a" />
          </AlignLine>
          <AlignIcons $ruled>
            {[0, 1, 2, 3, 4, 5].map((i) => (
              <AlignIcon key={i} index={i} />
            ))}
          </AlignIcons>
          <AlignLine>
            <span>レイヤーを配置 :</span>
          </AlignLine>
          <AlignIcons>
            {[0, 1, 2, 3, 4, 5].map((i) => (
              <AlignIcon key={i} index={i} distribute />
            ))}
          </AlignIcons>
        </AlignBody>
      </SidePanel>
      <SidePanel $grow>
        <SideHeader>
          <h2>Anchor_Move</h2>
          <Hamburger />
        </SideHeader>
        <AnchorBody>
          <AnchorGrid>
            {Array.from({ length: 9 }, (_, i) => (
              <AnchorCell key={i} aria-label={`アンカー ${i + 1}`} />
            ))}
          </AnchorGrid>
        </AnchorBody>
      </SidePanel>
    </Column>
  );
}

/* ---------- timeline ---------- */

const TimelinePanel = styled(Panel)`
  flex: 395 1 0;
  margin-top: 4px;
`;

const TimelineTabs = styled(PanelHeader)`
  padding-left: 29px;
`;

const TimelineMain = styled.div`
  flex: 1;
  min-height: 0;
  display: grid;
  grid-template-columns: 534px minmax(0, 1fr) 19px;
`;

const Outline = styled.div`
  padding-left: 2px;
  border-right: 1px solid black;
`;

const OutlineTop = styled.div`
  display: flex;
  align-items: center;
  height: 37px;
  padding-top: 1px;
  padding-left: 10px;
`;

const TimeDisplay = styled.div`
  width: 101px;
  padding-top: 2px;
  padding-right: 13px;
  text-align: center;
  color: #1f5f9f;
  font-size: 11px;
  line-height: 14px;

  strong {
    display: block;
    font-size: 14px;
    line-height: 15px;
    color: var(--color-blue);
  }
`;

const LayerSearch = styled(SearchBox)`
  width: 254px;
  margin-right: 12px;
`;

const LayerTable = styled.table`
  width: 531px;
  table-layout: fixed;
  border-collapse: collapse;
  border-top: 1px solid black;

  th,
  td {
    padding: 0;
    font-weight: normal;
    text-align: left;
  }

  th {
    height: 19px;
    border-bottom: 1px solid black;
    background: linear-gradient(#111, #111) right center / 1px 11px no-repeat;
  }

  td {
    height: 19px;
    background-color: #2a2a2a;
    border-bottom: 1px solid #202020;
  }
`;

const Cells = styled.div`
  display: flex;
  align-items: center;
  gap: ${(p) => p.$gap || 0}px;
  padding-left: ${(p) => p.$left || 0}px;
`;

const DarkBox = styled.span`
  flex: none;
  display: grid;
  place-items: center;
  width: 13px;
  height: 14px;
  color: #a6a6a6;
  background-color: ${(p) => (p.$clear ? "transparent" : "#202020")};
`;

const Tracks = styled.div`
  position: relative;
  display: flex;
  flex-direction: column;
  margin-left: 1px;
  overflow: hidden;
  padding-top: 7px;
`;

const Navigator = styled.div`
  flex: none;
  display: flex;
  justify-content: space-between;
  height: 10px;
  border-top: 1px solid black;
  border-bottom: 1px solid black;
  background-color: #646464;
`;

const Handle = styled.span`
  width: 6px;
  border-radius: ${(p) => (p.$end ? "0 4px 4px 0" : "4px 0 0 4px")};
  background-color: #2d8ceb;
`;

const Ruler = styled.div`
  flex: none;
  display: flex;
  justify-content: space-between;
  height: 20px;
  padding: 0 7px;
`;

const Tick = styled.span`
  width: 0;
  display: flex;
  flex-direction: column;
  align-items: center;
  font-size: 11px;
  line-height: 14px;

  &::after {
    content: "";
    flex: none;
    width: 1px;
    height: 6px;
    background-color: #8a8a8a;
  }
`;

const WorkArea = styled(Navigator)`
  height: 17px;
  background-color: #5e5e5e;
`;

const Cache = styled.div`
  flex: none;
  height: 4px;
  margin: 0 7px;
  border-bottom: 1px solid black;
`;

const TrackRow = styled.div`
  flex: none;
  position: relative;
  height: 19px;
  padding: 1px 0 2px;
  background-color: #3a3a3a;
  border-bottom: 1px solid #232323;

  /* shades whatever lies before the first and after the last frame */
  &::before,
  &::after {
    content: "";
    position: absolute;
    top: 0;
    bottom: 0;
    width: 7px;
    background-color: rgba(35, 35, 35, 0.4);
  }

  &::before {
    left: 0;
  }

  &::after {
    right: 0;
  }
`;

const Bar = styled.div`
  height: 16px;
  background-color: ${(p) => (p.$red ? "#7c3a3b" : "#73695a")};
  border: 1px solid ${(p) => (p.$red ? "#6a3a3a" : "#827764")};
  border-bottom-color: #5a5348;
  border-top-left-radius: ${(p) => (p.$cutStart ? "4px" : 0)};
  border-top-right-radius: ${(p) => (p.$cutEnd ? "4px" : 0)};
`;

const EmptyTracks = styled.div`
  flex: 1;
  background-color: #303030;
  border: solid #262626;
  border-width: 0 7px;
`;

const Playhead = styled.div`
  position: absolute;
  top: 20px;
  bottom: 0;
  left: 0;
  width: 15px;
  display: flex;
  flex-direction: column;
  align-items: center;

  &::after {
    content: "";
    flex: 1;
    width: 1px;
    background-color: #2d8ceb;
  }
`;

const Rail = styled.div`
  display: flex;
  flex-direction: column;
  align-items: center;
  gap: 9px;
  padding-top: 39px;
  border-left: 1px solid #161616;
`;

const StatusBar = styled.footer`
  flex: none;
  display: flex;
  align-items: center;
  height: 19px;
  padding-left: 6px;
  border-top: 1px solid black;
  font-size: 11px;
`;

const Teal = styled.span`
  width: 63px;
  padding-left: 7px;
  color: #5cc4a0;
`;

const RenderTime = styled.span`
  width: 122px;
  padding-left: 5px;
`;

const ModeButton = styled.button`
  width: 134px;
  height: 16px;
  line-height: 14px;
  border: 1px solid #333;
  border-radius: 2px;
  color: #9a9a9a;
`;

const ZoomSlider = styled.input`
  appearance: none;
  width: 49px;
  height: 12px;
  margin: 0 12px 0 10px;
  background: linear-gradient(#3c3c3c, #3c3c3c) center / 100% 2px no-repeat;

  &::-webkit-slider-thumb {
    appearance: none;
    width: 10px;
    height: 10px;
    border: 2px solid #9a9a9a;
    border-radius: 50%;
    background-color: #232323;
  }
`;

const LAYERS = [
  { name: "淡いシアン 平面 2", start: 0, end: 30, red: true },
  { name: "金魚(左下)", start: -0.15, end: 29.1, cutEnd: true },
  { name: "金魚(右下)", start: 0.77, end: 30.15, cutStart: true },
  { name: "金魚(右下)", start: 0, end: 30, cutStart: true, cutEnd: true },
  { name: "金魚(右下)", start: 2.5, end: 30.15, cutStart: true },
];

// 30 seconds are drawn between two 7px handles of a 1366px strip
const at = (seconds) => ((7 + seconds * 45.067) / 1366) * 100;

const CACHED = [
  [0.25, 0.31],
  [1.05, 1.13],
  [1.27, 1.31],
  [2.46, 2.86],
  [2.96, 3.1],
  [3.13, 3.23],
  [3.36, 3.39],
  [3.84, 3.91],
  [4.33, 4.4],
  [4.57, 4.84],
  [4.9, 5.01],
];

const cacheGradient = (() => {
  const stops = [];
  let last = 0;
  CACHED.forEach(([from, to]) => {
    const a = (from / 30) * 100;
    const b = (to / 30) * 100;
    stops.push(`#28a834 ${last}% ${a}%`, `#1a2496 ${a}% ${b}%`);
    last = b;
  });
  return `linear-gradient(90deg, ${stops.join(", ")}, #28a834 ${last}% 100%)`;
})();

const Eye = () => (
  <Svg width="11" height="8" viewBox="0 0 11 8">
    <path d="M0 4c3-5 8-5 11 0-3 5-8 5-11 0z" fill="#b0b0b0" />
    <circle cx="5.500" cy="4" r="2" fill="#b0b0b0" stroke="#1c1c1c" strokeWidth="1.400" />
  </Svg>
);

const Shy = () => (
  <Svg width="13" height="11" viewBox="0 0 13 11">
    <path d="M1.500 6C1.500-1.500 11.500-1.500 11.500 6z" fill="#a6a6a6" />
    <path d="M4.500 2v3M8.500 2v3M3 3.500h7" stroke="#2a2a2a" strokeWidth=".8" />
    <path d="M6.500 1v9M0 9.500h5M8 9.500h5M4 7h5" fill="none" stroke="#a6a6a6" strokeWidth="1.300" />
  </Svg>
);

const Slash = ({ dotted }) => (
  <Svg width="11" height="11" viewBox="0 0 11 11" stroke="#a6a6a6" strokeWidth="1.500">
    <path d={dotted ? "M1 1l9 9" : "M1 10l9-9"} strokeDasharray={dotted ? "4 1" : undefined} />
  </Svg>
);

const Film = ({ size = 12 }) => (
  <Svg width={size} height={size} viewBox="0 0 14 14">
    <path d="M.5 3v10.500H10" fill="none" stroke="#a6a6a6" />
    <path d="M2 0h12v12H2z" fill="#a6a6a6" />
    <path d="M3.500 1v10M12.500 1v10" stroke="#222" strokeDasharray="1.500 1.500" />
    <path d="M5 6h6" stroke="#222" />
  </Svg>
);

const Blur = ({ size = 13 }) => (
  <Svg width={size} height={size} viewBox="0 0 14 14" stroke="#222" strokeWidth=".8">
    <circle cx="4.500" cy="9.500" r="4" fill="#707070" />
    <circle cx="6.800" cy="7.200" r="4" fill="#8a8a8a" />
    <circle cx="9.300" cy="4.700" r="4.200" fill="#aaa" />
  </Svg>
);

const CompIcon = () => (
  <Svg width="16" height="13" viewBox="0 0 16 13">
    <rect width="16" height="13" fill="#b4b4b4" />
    <path d="M1.500 1v11M14.500 1v11" stroke="#333" strokeDasharray="2 1.500" />
    <rect x="3" y="2" width="10" height="9" fill="#39424a" />
    <circle cx="6" cy="5" r="2.400" fill="#3a82c8" />
    <rect x="8" y="4" width="4" height="4" fill="#c04438" />
    <path d="M7.500 6l3 4.500h-6z" fill="#3a9a48" />
  </Svg>
);

const Spiral = () => (
  <Svg width="12" height="12" viewBox="0 0 12 12" fill="none" stroke="#909090" strokeWidth="1.100">
    <path d="M6.500 6c0-1.200-2-1-2 .5 0 2 4 1.800 4-.8 0-3.200-6-3.200-6.200.6-.2 4.500 8.700 5 8.700-1.300 0-2-.8-3.200-2-4" />
  </Svg>
);

function LayerRow({ layer, index }) {
  return (
    <tr>
      <td>
        <Cells $left={4}>
          <DarkBox>
            <Eye />
          </DarkBox>
          <Spacer $width={17} />
          <DarkBox />
          <Spacer $width={2} />
          <DarkBox />
        </Cells>
      </td>
      <td>
        <Cells $left={4} $gap={5}>
          <Chevron dir="right" />
          <Swatch $size={14} $color={layer.red ? "#b53a3a" : undefined} />
        </Cells>
      </td>
      <td>
        <Cells $left={6}>{index + 1}</Cells>
      </td>
      <td>
        <Cells $left={3} $gap={5}>
          {layer.red ? <Swatch $size={15} $color="#ccffff" /> : <CompIcon />}
          <span>{layer.name}</span>
        </Cells>
      </td>
      <td>
        <Cells $left={5} $gap={2}>
          <DarkBox>
            <Shy />
          </DarkBox>
          <DarkBox />
          <DarkBox>
            <Slash />
          </DarkBox>
          <DarkBox $clear={!layer.red}>{layer.red && <FxLabel>fx</FxLabel>}</DarkBox>
          <DarkBox $clear />
          <DarkBox />
          <DarkBox />
          <DarkBox />
        </Cells>
      </td>
      <td>
        <Cells $left={6} $gap={6}>
          <Spiral />
          <Select
            label={`親とリンク ${index + 1}`}
            value="なし"
            $width={89}
            $height={16}
            $background="#1d1d1d"
            $border="#1d1d1d"
          />
        </Cells>
      </td>
      <td />
    </tr>
  );
}

function Layers() {
  return (
    <Outline>
      <OutlineTop>
        <TimeDisplay>
          <strong>0:00:00:00</strong>
          00000 (29.97 fps)
        </TimeDisplay>
        <LayerSearch>
          <Magnifier />
          <input aria-label="レイヤーを検索" />
        </LayerSearch>
        <IconButton aria-label="ミニフローチャート">
          <Svg width="17" height="13" viewBox="0 0 17 13" fill="#a6a6a6">
            <path d="M0 2h5v3H0zM8 1h5v3H8zM8 7h5v3H8zM11 10h6l-3 3z" />
            <path d="M5 3.500h3M6.500 3.500v5H8" stroke="#a6a6a6" fill="none" />
          </Svg>
        </IconButton>
        <Spacer $width={8} />
        <IconButton aria-label="シャイ">
          <Svg width="16" height="13" viewBox="0 0 16 13">
            <path d="M2 6C2-1 14-1 14 6z" fill="#b0b0b0" />
            <path d="M0 7h16v6H0z" fill="#686868" />
            <path d="M8 1v10" stroke="#b0b0b0" strokeWidth="2" />
          </Svg>
        </IconButton>
        <IconButton aria-label="フレームブレンド">
          <Film size={14} />
        </IconButton>
        <Spacer $width={1} />
        <IconButton aria-label="モーションブラー">
          <Blur size={15} />
        </IconButton>
        <Spacer $width={9} />
        <IconButton aria-label="グラフエディター">
          <Svg width="16" height="16" viewBox="0 0 16 16" fill="none" stroke="#a6a6a6" strokeWidth="1.200">
            <path d="M1 3h14v12H1zM3 1v2M6 1v2M9 1v2M12 1v2M2 6c5 0 6 6 12 7" />
          </Svg>
        </IconButton>
      </OutlineTop>
      <LayerTable>
        <colgroup>
          <col width="67" />
          <col width="33" />
          <col width="32" />
          <col width="130" />
          <col width="137" />
          <col width="116" />
          <col width="16" />
        </colgroup>
        <thead>
          <tr>
            <th aria-label="表示">
              <Cells $left={5} $gap={4}>
                <Eye />
                <Svg width="13" height="11" viewBox="0 0 13 11">
                  <path d="M0 3.500h3L6 0v11L3 7.500H0z" fill="#a6a6a6" />
                  <path d="M8 3c1.500 1.500 1.500 3.500 0 5M10 1c3 2.500 3 6.500 0 9" stroke="#a6a6a6" fill="none" />
                </Svg>
                <Svg width="9" height="8" viewBox="0 0 9 8">
                  <circle cx="4.500" cy="4" r="3.500" fill="#a6a6a6" />
                </Svg>
                <Lock closed />
              </Cells>
            </th>
            <th aria-label="ラベル">
              <Cells $left={14}>
                <Svg width="12" height="12" viewBox="0 0 12 12">
                  <path d="M0 0h5.500L12 6.500 7 12 0 5.500z" fill="#a6a6a6" />
                  <circle cx="3" cy="3" r="1" fill="#222" />
                </Svg>
              </Cells>
            </th>
            <th>
              <Cells $left={6}>#</Cells>
            </th>
            <th>
              <Cells $left={6}>ソース名</Cells>
            </th>
            <th aria-label="スイッチ">
              <Cells $left={5} $gap={2}>
                <DarkBox $clear>
                  <Shy />
                </DarkBox>
                <DarkBox $clear>
                  <Svg width="11" height="11" viewBox="0 0 11 11" fill="none" stroke="#a6a6a6">
                    <circle cx="5.500" cy="5.500" r="2" />
                    <path d="M5.500 0v3M5.500 8v3M0 5.500h3M8 5.500h3M1.500 1.500l2 2M7.500 7.500l2 2M9.500 1.500l-2 2M3.500 7.500l-2 2" />
                  </Svg>
                </DarkBox>
                <DarkBox $clear>
                  <Slash dotted />
                </DarkBox>
                <DarkBox $clear>
                  <FxLabel>fx</FxLabel>
                </DarkBox>
                <DarkBox $clear>
                  <Film />
                </DarkBox>
                <DarkBox $clear>
                  <Blur />
                </DarkBox>
                <DarkBox $clear>
                  <Svg width="11" height="11" viewBox="0 0 11 11">
                    <circle cx="5.500" cy="5.500" r="4.500" fill="none" stroke="#a6a6a6" />
                    <path d="M8.700 2.300A4.500 4.500 0 0 0 2.300 8.700z" fill="#a6a6a6" />
                  </Svg>
                </DarkBox>
                <DarkBox $clear>
                  <Svg width="11" height="11" viewBox="0 0 11 11" fill="none" stroke="#a6a6a6">
                    <path d="M5.500 1l4 2v5l-4 2.500L1.500 8V3zM1.500 3l4 2.500 4-2.500M5.500 5.500v5" />
                  </Svg>
                </DarkBox>
              </Cells>
            </th>
            <th>
              <Cells $left={6}>親とリンク</Cells>
            </th>
            <th aria-label="余白" />
          </tr>
        </thead>
        <tbody>
          {LAYERS.map((layer, index) => (
            <LayerRow key={index} layer={layer} index={index} />
          ))}
        </tbody>
      </LayerTable>
    </Outline>
  );
}

function Timeline() {
  return (
    <TimelinePanel>
      <TimelineTabs>
        <Tab $muted>レンダーキュー</Tab>
        <Spacer $width={34} />
        <Tab $active>
          <CloseX />
          <Swatch />
          <h2>コンポ 1</h2>
          <Hamburger />
        </Tab>
        <Spacer $width={34} />
        <Tab $muted $large $gap={12}>
          <Swatch />
          金魚(左下)
        </Tab>
        <Spacer $width={57} />
        <Tab $muted $large $gap={12}>
          <Swatch />
          金魚(右下)
        </Tab>
      </TimelineTabs>
      <TimelineMain>
        <Layers />
        <Tracks>
          <Navigator>
            <Handle />
            <Handle $end />
          </Navigator>
          <Ruler>
            {Array.from({ length: 16 }, (_, i) => (
              <Tick key={i}>{i === 0 ? "0:00s" : `${String(i * 2).padStart(2, "0")}s`}</Tick>
            ))}
          </Ruler>
          <WorkArea>
            <Handle />
            <Handle $end />
          </WorkArea>
          <Cache style={{ background: cacheGradient }} />
          {LAYERS.map((layer, index) => (
            <TrackRow key={index}>
              <Bar
                $red={layer.red}
                $cutStart={layer.cutStart}
                $cutEnd={layer.cutEnd}
                style={{
                  marginLeft: `${at(layer.start)}%`,
                  width: `${at(layer.end) - at(layer.start)}%`,
                }}
              />
            </TrackRow>
          ))}
          <EmptyTracks />
          <Playhead>
            <Svg width="11" height="15" viewBox="0 0 11 15">
              <path d="M0 0h11v8l-5.500 7L0 8z" fill="#2d8ceb" />
              <path d="M5.500 6v9" stroke="#14528f" />
            </Svg>
          </Playhead>
        </Tracks>
        <Rail>
          <Svg width="11" height="13" viewBox="0 0 11 13">
            <path d="M0 0h11v9l-5.500 4L0 9z" fill="#a6a6a6" />
          </Svg>
          <Svg width="14" height="12" viewBox="0 0 14 12">
            <path d="M7 1h7v9H7z" fill="#a6a6a6" />
            <path d="M7 0v5L1 8z" fill="none" stroke="#a6a6a6" />
            <circle cx="6.500" cy="8.500" r="2.500" fill="#232323" stroke="#a6a6a6" />
          </Svg>
        </Rail>
      </TimelineMain>
      <StatusBar>
        <IconButton aria-label="レイヤースイッチ" $width={17} $height={16} $active $blue>
          <Svg width="12" height="12" viewBox="0 0 12 12" fill="none" stroke="currentColor">
            <path d="M2 8H.5V.5h7V2M4 10H2.500V2.500h7V4M4.500 4.500h7v7h-7zM8 6v4M6 8h4" />
          </Svg>
        </IconButton>
        <IconButton aria-label="転送制御" $width={21} $height={16}>
          <Svg width="12" height="12" viewBox="0 0 12 12" fill="none" stroke="currentColor" strokeWidth="1.300">
            <circle cx="4.500" cy="4.500" r="3.800" />
            <path d="M5 5h6v6H5z" />
          </Svg>
        </IconButton>
        <IconButton aria-label="イン アウト" $width={18} $height={16}>
          <Svg width="11" height="12" viewBox="0 0 11 12" fill="currentColor">
            <path d="M2.500 0h2v12h-2V9L0 6l2.500-3zM6.500 0h2v3L11 6 8.500 9v3h-2z" />
            <path d="M5 0h1v12H5z" opacity=".6" />
          </Svg>
        </IconButton>
        <IconButton aria-label="レンダリング時間" $width={20} $height={16}>
          <Svg width="13" height="12" viewBox="0 0 13 12" fill="currentColor">
            <path d="M4.500 0a4 4 0 0 1 2.500 7l2 3v1H0v-1l2.200-3A4 4 0 0 1 4.500 0z" />
            <path d="M9 1h4v4l-3 4V5H9z" />
          </Svg>
        </IconButton>
        <RenderTime>フレームレンダリング時間</RenderTime>
        <Teal>4ms</Teal>
        <ModeButton>スイッチ / モード</ModeButton>
        <Spacer $width={140} />
        <Svg width="10" height="5" viewBox="0 0 10 5">
          <path d="M0 5l2-2 1.500 1L6 0l4 5z" fill="#a6a6a6" />
        </Svg>
        <ZoomSlider type="range" min="0" max="100" defaultValue="5" aria-label="タイムラインの拡大" />
        <Svg width="16" height="9" viewBox="0 0 16 9">
          <path d="M0 9l4-5 2 2L10 0l6 9z" fill="#a6a6a6" />
        </Svg>
      </StatusBar>
    </TimelinePanel>
  );
}

/* ---------- taskbar ---------- */

const Taskbar = styled.footer`
  flex: none;
  display: grid;
  grid-template-columns: 1fr auto 1fr;
  align-items: center;
  height: 48px;
  background: linear-gradient(
    90deg,
    #202b30 0%,
    #202b31 18%,
    #12284a 22%,
    #10244e 30%,
    #12224f 45%,
    #10254a 58%,
    #102652 67%,
    #152250 73%,
    #1e2a35 79%,
    #1d2a36 100%
  );
  color: white;
`;

const Apps = styled.div`
  grid-column: 2;
  display: flex;
  gap: 4px;
`;

const AppButton = styled.button`
  position: relative;
  display: grid;
  place-items: center;
  width: 40px;
  height: 40px;
  border-radius: 4px;
  background-color: ${(p) => (p.$active ? "rgba(255, 255, 255, 0.09)" : "transparent")};

  &::after {
    content: "";
    position: absolute;
    bottom: 1px;
    width: ${(p) => (p.$active ? 16 : 6)}px;
    height: 3px;
    border-radius: 2px;
    background-color: ${(p) => (p.$active ? "#5cb8f0" : p.$open ? "#8e98ac" : "transparent")};
  }
`;

const Tray = styled.div`
  display: flex;
  align-items: center;
  justify-content: flex-end;
  gap: 8px;
  padding-right: 20px;
`;

const Clock = styled.time`
  margin: 0 6px 0 10px;
  text-align: right;
  font-size: 11px;
  line-height: 16px;
`;

const Ime = styled.span`
  margin: 0 7px 0 9px;
  font-size: 16px;
`;

const office = (main, dark, light, letter) => (
  <>
    <rect x="7" y="2" width="17" height="20" rx="1" fill={light} />
    <path d="M7 8h17v7H7z" fill={main} />
    <path d="M7 15h17v6a1 1 0 0 1-1 1H7z" fill={dark} />
    <rect x="0" y="6" width="13" height="13" rx="1" fill={dark} />
    <text x="6.500" y="16" textAnchor="middle" fontSize="10" fontWeight="700" fill="white" fontFamily="Open Sans, sans-serif">
      {letter}
    </text>
  </>
);

const fusion = (
  <>
    <path d="M4 1h18v22H4z" fill="#ff6c0a" />
    <path d="M4 1L1 3v17l3-1z" fill="#ffb07c" />
    <path d="M4 17h18v7H4z" fill="#8c3a04" />
    <text x="13" y="14" textAnchor="middle" fontSize="13" fontWeight="700" fill="white" fontFamily="Open Sans, sans-serif">
      F
    </text>
    <text x="13" y="23" textAnchor="middle" fontSize="6" fontWeight="700" fill="white" fontFamily="Open Sans, sans-serif">
      360
    </text>
  </>
);

const APPS = [
  {
    name: "スタート",
    icon: (
      <>
        <path d="M1 1h10.500v10.500H1z" fill="#7adcfa" />
        <path d="M12.500 1H23v10.500H12.500z" fill="#5accf8" />
        <path d="M1 12.500h10.500V23H1z" fill="#4cc2f8" />
        <path d="M12.500 12.500H23V23H12.500z" fill="#2aa8f4" />
      </>
    ),
  },
  {
    name: "検索",
    icon: (
      <>
        <circle cx="14" cy="10" r="8" fill="#46506a" stroke="#e8e8e8" strokeWidth="2" />
        <path d="M8 16l-6 7" stroke="#e8e8e8" strokeWidth="2.500" />
      </>
    ),
  },
  {
    name: "Outlook",
    icon: (
      <>
        <path d="M8 1h15v12H8z" fill="#1a78c8" />
        <path d="M15 4h8v6h-8z" fill="#48b4ec" />
        <path d="M6 11l9 5 9-5v12H6z" fill="#2a90dc" />
        <path d="M6 23l10-7 8 7z" fill="#1060b0" />
        <rect x="0" y="6" width="13" height="13" rx="1" fill="#0f62b4" />
        <circle cx="6.500" cy="12.500" r="3" fill="none" stroke="white" strokeWidth="1.800" />
      </>
    ),
  },
  {
    name: "Edge",
    open: true,
    icon: (
      <>
        <circle cx="12" cy="12" r="11.500" fill="#1668b8" />
        <path d="M.7 11C2 3 8 .5 12 .5c7 0 11.500 5 11.500 10 0 4-3 6-6.500 6-3 0-4-1.500-3-3 1.500-3-1-6-5-6-3.500 0-6.500 1.500-8.300 3.500z" fill="#3cc8a8" />
        <path d="M.7 11C2 4 7 .5 12 .5c3 0 5 1 6 2-4-1-9 0-11 5-3 .5-5 2-6.300 3.500z" fill="#28a4dc" />
        <path d="M8.500 11c-2 5 2 11 8.500 11-7 4-15-1-16.300-9C3 9.500 6 9 8.500 11z" fill="#0f4a94" />
      </>
    ),
  },
  {
    name: "Chrome",
    open: true,
    icon: (
      <>
        <circle cx="12" cy="12" r="11" fill="#34a853" />
        <path d="M2.500 6.500A11 11 0 0 1 21.500 6.500H12L7.200 14.800z" fill="#ea4335" />
        <path d="M21.500 6.500A11 11 0 0 1 12 23l4.800-8.200L12 6.500z" fill="#fbbc05" />
        <circle cx="12" cy="12" r="5.200" fill="white" />
        <circle cx="12" cy="12" r="4.200" fill="#4285f4" />
      </>
    ),
  },
  {
    name: "エクスプローラー",
    icon: (
      <>
        <path d="M0 3a1 1 0 0 1 1-1h8l2 3H0z" fill="#d89a18" />
        <path d="M0 5h10l2-2h11a1 1 0 0 1 1 1v18a1 1 0 0 1-1 1H1a1 1 0 0 1-1-1z" fill="#fcd050" />
        <path d="M4 23v-5a2 2 0 0 1 2-2h12a2 2 0 0 1 2 2v5z" fill="#2a84c8" />
        <path d="M8 20h8v3H8z" fill="#1a60a0" />
      </>
    ),
  },
  { name: "Excel", icon: office("#21a366", "#107c41", "#33c481", "X") },
  { name: "Word", open: true, icon: office("#2b7cd3", "#185abd", "#41a5ee", "W") },
  { name: "Fusion 360", icon: fusion },
  {
    name: "i",
    icon: (
      <>
        <path d="M12 1l9.500 5.500v11L12 23l-9.500-5.500v-11z" fill="#4a0c10" stroke="#9c1018" strokeWidth="1.500" />
        <path d="M10.500 9h3v10h-3z" fill="white" />
        <circle cx="12" cy="5.500" r="1.800" fill="white" />
      </>
    ),
  },
  {
    name: "W",
    icon: (
      <>
        <circle cx="12" cy="12" r="12" fill="white" />
        <path
          d="M6 7v7c0 4 6 4 6 0V7M12 14c0 4 6 4 6 0V7"
          fill="none"
          stroke="#4aa4dc"
          strokeWidth="1.800"
        />
      </>
    ),
  },
  {
    name: "Creative Cloud",
    open: true,
    icon: (
      <>
        <defs>
          <linearGradient id="cc-base" x1="0" y1="0" x2="1" y2="0">
            <stop offset="0" stopColor="#f08a1c" />
            <stop offset=".5" stopColor="#e83050" />
            <stop offset="1" stopColor="#b03cc8" />
          </linearGradient>
          <linearGradient id="cc-low" x1="0" y1="0" x2="1" y2="0">
            <stop offset="0" stopColor="#f4d030" />
            <stop offset=".5" stopColor="#60c850" />
            <stop offset="1" stopColor="#3090e8" />
          </linearGradient>
        </defs>
        <rect x="1" y="1" width="22" height="22" rx="4" fill="url(#cc-base)" />
        <path d="M1 17c7-3 15-3 22 0v2a4 4 0 0 1-4 4H5a4 4 0 0 1-4-4z" fill="url(#cc-low)" />
        <g fill="none" stroke="white" strokeWidth="2">
          <circle cx="9" cy="13" r="4" />
          <path d="M8 10c2-5 11-4 11 2 0 5-6 6-9 3" />
          <path d="M10 13c2-4 6-4 6-1" />
        </g>
      </>
    ),
  },
  { name: "Fusion 360 (2)", open: true, icon: fusion },
];

function WindowsTaskbar() {
  return (
    <Taskbar>
      <Apps>
        {APPS.map((app) => (
          <AppButton key={app.name} aria-label={app.name} $open={app.open}>
            <Svg width="24" height="24" viewBox="0 0 24 24">
              {app.icon}
            </Svg>
          </AppButton>
        ))}
        <AppButton aria-label="After Effects" $active>
          <AppBadge $size={21}>Ae</AppBadge>
        </AppButton>
      </Apps>
      <Tray>
        <Svg width="13" height="8" viewBox="0 0 13 8" fill="none" stroke="white" strokeWidth="1.200">
          <path d="M1 7l5.500-5.500L12 7" />
        </Svg>
        <Ime>あ</Ime>
        <Svg width="17" height="16" viewBox="0 0 17 16" fill="none" stroke="white" strokeWidth="1.200">
          <path d="M10 1.500H1.500v10h13V8M5 14.500h7M7 12v2.500M10 12v2.500M12 .8h4v4.500h-4zM14 5.500v6" />
        </Svg>
        <Svg width="16" height="14" viewBox="0 0 16 14" fill="none" stroke="white" strokeWidth="1.100">
          <path d="M1 5h2.500L7 2v10L3.500 9H1zM9 5c1 1.200 1 2.800 0 4M11 3c2 2.500 2 5.500 0 8" />
          <path d="M13 1c3 3.500 3 8.500 0 12" stroke="#66727c" />
        </Svg>
        <Clock>
          17:17
          <br />
          2022/08/31
        </Clock>
        <Svg width="14" height="14" viewBox="0 0 14 14" fill="none" stroke="white" strokeWidth="1.200">
          <path d="M6 1c6 0 8 4 7 7-1.500 5-8 6.500-12 3 5 0 7-5 5-10z" />
        </Svg>
      </Tray>
    </Taskbar>
  );
}

const Workspaces = styled.main`
  flex: 563 1 0;
  min-height: 0;
  display: grid;
  grid-template-columns: 205px 360px minmax(0, 1fr) 309px;
  grid-template-rows: minmax(0, 1fr);
  gap: 4px;
  padding: 0 1px 0 2px;
`;

function App() {
  return (
    <Screen>
      <GlobalStyle />
      <WindowChrome />
      <ToolStrip />
      <Workspaces>
        <EffectsPanel />
        <EffectControls />
        <Viewer />
        <SideColumn />
      </Workspaces>
      <Timeline />
      <WindowsTaskbar />
    </Screen>
  );
}

export default App;
